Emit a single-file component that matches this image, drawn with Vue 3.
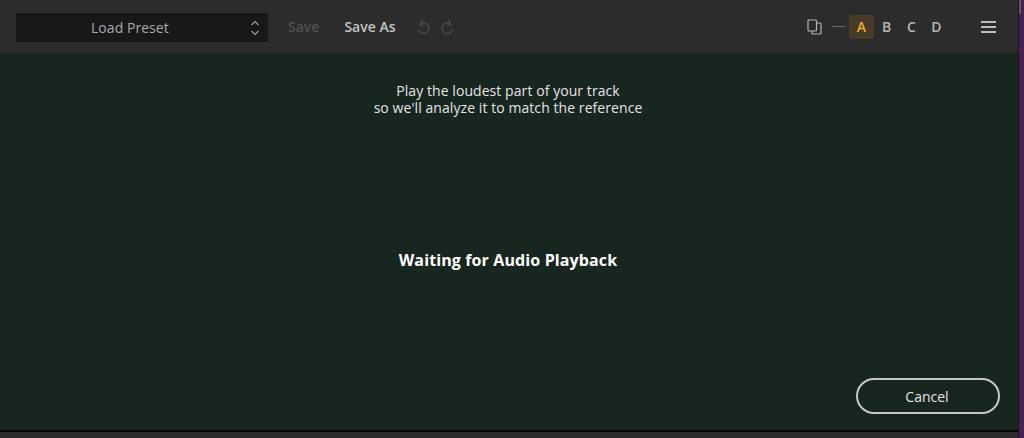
<script setup>
const slots = ['A', 'B', 'C', 'D']
</script>

<template>
  <div class="screen">
    <div class="plugin">
      <header class="toolbar">
        <div class="preset">
          <span class="presetName">Load Preset</span>
          <svg class="updown" width="10" height="18" viewBox="0 0 10 18" fill="none" stroke="#9a9a9a" stroke-width="1.2">
            <path d="M1.5 6 5 2.5 8.500 6" />
            <path d="M1.500 12 5 15.500 8.500 12" />
          </svg>
        </div>
        <span class="saveBtn disabled">Save</span>
        <span class="saveBtn">Save As</span>
        <div class="history">
          <svg width="16" height="18" viewBox="0 0 16 18" fill="none" stroke="#4d4d4d" stroke-width="1.300">
            <path d="M5 6.500A5.300 5.300 0 1 1 3.400 11" />
            <path d="M8 1.500 5 6.500 9.500 8" />
          </svg>
          <svg width="16" height="18" viewBox="0 0 16 18" fill="none" stroke="#4d4d4d" stroke-width="1.300">
            <path d="M11 6.500A5.300 5.300 0 1 0 12.600 11" />
            <path d="M8 1.500 11 6.500 6.500 8" />
          </svg>
        </div>
        <div class="right">
          <svg class="copy" width="15" height="16" viewBox="0 0 15 16" fill="none" stroke="#b4b4b4" stroke-width="1.200">
            <rect x="1" y="1" width="8.500" height="11" rx="1" />
            <path d="M10 4H13A1 1 0 0 1 14 5V14A1 1 0 0 1 13 15H6A1 1 0 0 1 5 14V12" />
          </svg>
          <span class="dash"></span>
          <div class="slots">
            <span v-for="s in slots" :key="s" class="slot" :class="{ active: s === 'A' }">{{ s }}</span>
          </div>
          <div class="burger"><i></i><i></i><i></i></div>
        </div>
      </header>

      <main class="body">
        <p class="hint">Play the loudest part of your track<br />so we'll analyze it to match the reference</p>
        <p class="waiting">Waiting for Audio Playback</p>
        <div class="actions">
          <button class="cancel">Cancel</button>
        </div>
      </main>
      <div class="footer"></div>
    </div>
    <div class="edge"><i></i></div>
  </div>
</template>

<style>
html, body {
  margin: 0;
  background: #2d2b2c;
}
</style>

<style scoped>
.screen {
  display: flex;
  width: 1024px;
  height: 438px;
  overflow: hidden;
  font-family: "Open Sans", "Noto Sans", sans-serif;
}
.plugin {
  flex: 1;
  display: flex;
  flex-direction: column;
  min-width: 0;
}
.edge {
  width: 6px;
  background: #47214f;
  border-left: 1px solid #191718;
  box-sizing: border-box;
}
.edge i {
  display: block;
  width: 2px;
  height: 14px;
  background: #6b5270;
}
.toolbar {
  height: 53px;
  flex: none;
  display: flex;
  align-items: center;
  background: #2d2c2d;
  padding: 0 0 0 16px;
  box-sizing: border-box;
}
.preset {
  width: 252px;
  height: 29px;
  background: #191819;
  display: flex;
  align-items: center;
  padding-left: 75px;
  box-sizing: border-box;
  margin-top: 1px;
}
.presetName {
  color: #a9a9a9;
  font-size: 14px;
  letter-spacing: 0.05px;
  width: 159px;
}
.updown {
  margin-top: 1px;
}
.saveBtn {
  font-size: 14px;
  font-weight: 600;
  color: #c4c4c4;
  margin-left: 25px;
}
.saveBtn.disabled {
  color: #4f4f4f;
  margin-left: 20px;
}
.history {
  display: flex;
  gap: 9px;
  margin-left: 20px;
}
.right {
  margin-left: auto;
  display: flex;
  align-items: center;
  padding-right: 22px;
}
.copy {
  margin-right: 10px;
}
.dash {
  width: 13px;
  height: 1px;
  background: #6a6a6a;
  margin-right: 4px;
}
.slots {
  display: flex;
  margin-right: 32px;
}
.slot {
  width: 25px;
  height: 24px;
  line-height: 24px;
  text-align: center;
  font-size: 14px;
  font-weight: 600;
  color: #b4b4b4;
  border-radius: 3px;
}
.slot.active {
  color: #eeaa33;
  background: #473b28;
}
.burger {
  width: 15px;
  display: flex;
  flex-direction: column;
  gap: 3px;
}
.burger i {
  display: block;
  height: 2px;
  background: #bdbdbd;
}
.body {
  flex: 1;
  background: #182620;
  display: flex;
  flex-direction: column;
  align-items: center;
  min-height: 0;
  padding-right: 2px;
}
.hint {
  margin: 29px 0 0;
  color: #e4e4e4;
  font-size: 14px;
  letter-spacing: 0.07px;
  line-height: 17px;
  text-align: center;
}
.waiting {
  margin: 134px 0 0;
  color: #fff;
  font-size: 16px;
  font-weight: 700;
  letter-spacing: 0.12px;
  line-height: 20px;
}
.actions {
  margin-top: auto;
  align-self: stretch;
  display: flex;
  justify-content: flex-end;
  padding: 0 16px 16px 0;
}
.cancel {
  width: 144px;
  height: 36px;
  border: 2px solid #c4c8c5;
  border-radius: 18px;
  background: transparent;
  color: #e4e4e4;
  font-family: inherit;
  font-size: 14px;
  padding: 0 2px 0 0;
}
.footer {
  height: 8px;
  flex: none;
  background: #2d2b2c;
  border-top: 2px solid #050505;
  box-sizing: border-box;
}
</style>
